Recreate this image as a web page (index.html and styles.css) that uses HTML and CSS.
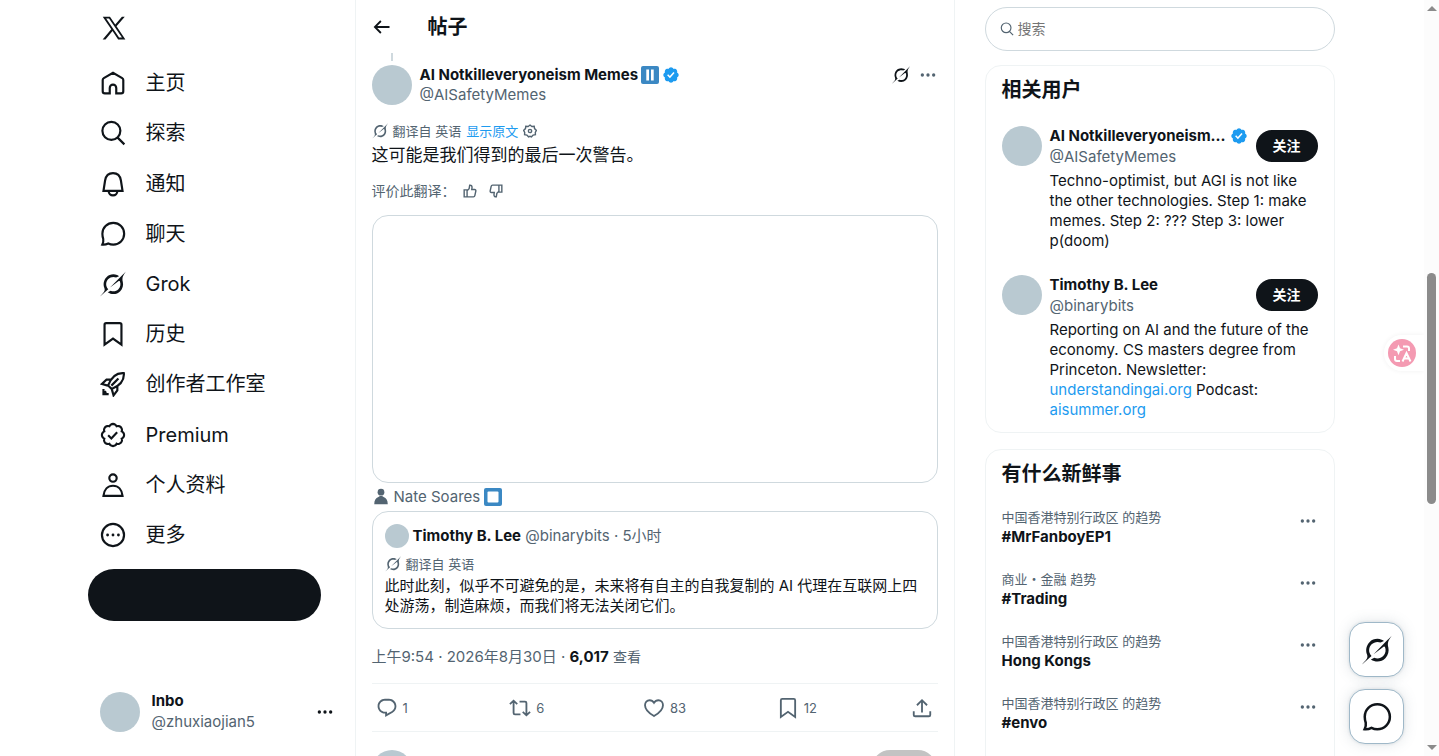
FILE: index.html
```html
<!DOCTYPE html>
<html lang="zh-CN">
<head>
<meta charset="utf-8">
<title>帖子 / X</title>
<link rel="stylesheet" href="styles.css">
</head>
<body>
<svg class="sprite" aria-hidden="true">
  <symbol id="x" viewBox="0 0 24 24"><path d="M21.742 21.75l-7.563-11.179 7.056-8.321h-2.456l-5.691 6.714-4.54-6.714H2.359l7.29 10.776L2.25 21.75h2.456l6.035-7.118 4.818 7.118h6.191-.008zM7.739 3.818L18.81 20.182h-2.447L5.29 3.818h2.447z"/></symbol>
  <symbol id="home" viewBox="0 0 24 24"><path class="line" d="M9 21.5H4.500A2 2 0 0 1 2.500 19.500V9.200a2 2 0 0 1 1-1.750L12 2.500l8.500 4.950a2 2 0 0 1 1 1.750v10.300a2 2 0 0 1-2 2H15V16.500a3 3 0 0 0-6 0z"/></symbol>
  <symbol id="search" viewBox="0 0 24 24"><path class="line" d="M10.500 1.700a8.300 8.300 0 1 1 0 16.600a8.300 8.300 0 0 1 0-16.600zM16.500 16.500l6 6"/></symbol>
  <symbol id="bell" viewBox="0 0 24 24"><path class="line" d="M3.200 18.300L4.700 8.800C5.400 4.500 8 2 12 2s6.600 2.500 7.300 6.800l1.500 9.500zM8 18.500c0 2.300 1.700 4 4 4s4-1.700 4-4"/></symbol>
  <symbol id="chat" viewBox="0 0 24 24"><path class="line" d="M12.300 1.800c5.600 0 10 4.400 10 10s-4.400 10-10 10c-1.700 0-3.300-.4-4.700-1.100-1.700.9-3.500 1.300-5.500 1.100.8-1.700 1.200-3.400.9-5.200-.5-1.500-.8-3-.8-4.800 0-5.600 4.400-10 10.100-10z"/></symbol>
  <symbol id="grok" viewBox="0 0 33 32"><path d="M12.745 20.54l10.97-8.19c.539-.4 1.307-.244 1.564.38 1.349 3.288.746 7.241-1.938 9.955-2.683 2.714-6.417 3.31-9.83 1.954l-3.728 1.745c5.347 3.697 11.84 2.782 15.898-1.324 3.219-3.255 4.216-7.692 3.284-11.693l.008.009c-1.351-5.878.332-8.227 3.782-13.031L33 0l-4.54 4.59v-.014L12.743 20.544m-2.263 1.987c-3.837-3.707-3.175-9.446.1-12.755 2.42-2.449 6.388-3.448 9.852-1.979l3.72-1.737c-.67-.49-1.53-1.017-2.515-1.387-4.455-1.854-9.789-.931-13.41 2.728-3.483 3.523-4.579 8.94-2.697 13.561 1.405 3.454-.899 5.898-3.22 8.364C1.49 30.2.666 31.074 0 32l10.478-9.466"/></symbol>
  <symbol id="bookmark" viewBox="0 0 24 24"><path class="line" d="M4.200 3.500a1.500 1.500 0 0 1 1.500-1.500h12.600a1.500 1.500 0 0 1 1.500 1.500v18.300L12 16.200l-7.800 5.600z"/></symbol>
  <symbol id="rocket" viewBox="0 0 24 24"><path class="line" d="M22 2c-6-.5-11.500 3.500-14.500 11.300l3.300 3.300C18.500 13.500 22.500 8 22 2zM10.500 8H6l-4.300 4 5.500 1.500M16 13.500V18l-3.500 4.500-1.700-6M17 7l-6.500 6.500M3.200 16.500v4.800H8M3.200 21.300l2.500-2.500"/></symbol>
  <symbol id="premium" viewBox="0 0 22 22"><path class="line thin" d="M20.396 11c-.018-.646-.215-1.275-.57-1.816-.354-.54-.852-.972-1.438-1.246.223-.607.27-1.264.14-1.897-.131-.634-.437-1.218-.882-1.687-.47-.445-1.053-.75-1.687-.882-.633-.13-1.29-.083-1.897.14-.273-.587-.704-1.086-1.245-1.44S11.647 1.620 11 1.604c-.646.017-1.273.213-1.813.568s-.969.854-1.240 1.440c-.608-.223-1.267-.272-1.902-.140-.635.130-1.220.436-1.690.882-.445.470-.749 1.055-.878 1.688-.130.633-.080 1.290.144 1.896-.587.274-1.087.705-1.443 1.245-.356.540-.555 1.170-.574 1.817.020.647.218 1.276.574 1.817.356.540.856.972 1.443 1.245-.224.606-.274 1.263-.144 1.896.130.634.433 1.218.877 1.688.470.443 1.054.747 1.687.878.633.132 1.290.084 1.897-.136.274.586.705 1.084 1.246 1.439.540.354 1.170.551 1.816.569.647-.016 1.276-.213 1.817-.567s.972-.854 1.245-1.440c.604.239 1.266.296 1.903.164.636-.132 1.220-.447 1.680-.907.460-.460.776-1.044.908-1.681s.075-1.299-.165-1.903c.586-.274 1.084-.705 1.439-1.246.354-.540.551-1.170.569-1.816zM6.900 11.300l2.700 2.700 4.900-5.400"/></symbol>
  <symbol id="person" viewBox="0 0 24 24"><path class="line" d="M12 2.200a3.400 3.400 0 1 1 0 6.800a3.400 3.400 0 0 1 0-6.800zM3.200 22c.6-5.700 3.900-9.300 8.800-9.300s8.200 3.600 8.800 9.300z"/></symbol>
  <symbol id="more" viewBox="0 0 24 24"><circle class="line" cx="12" cy="12" r="10.200"/><circle cx="7" cy="12" r="1.300"/><circle cx="12" cy="12" r="1.300"/><circle cx="17" cy="12" r="1.300"/></symbol>
  <symbol id="dots" viewBox="0 0 24 24"><circle cx="3.500" cy="12" r="2.500"/><circle cx="12" cy="12" r="2.500"/><circle cx="20.500" cy="12" r="2.500"/></symbol>
  <symbol id="back" viewBox="0 0 24 24"><path class="line bold" d="M10.500 4l-8 8 8 8M3.500 12H22"/></symbol>
  <symbol id="verified" viewBox="0 0 22 22"><path d="M20.396 11c-.018-.646-.215-1.275-.57-1.816-.354-.54-.852-.972-1.438-1.246.223-.607.27-1.264.14-1.897-.131-.634-.437-1.218-.882-1.687-.47-.445-1.053-.75-1.687-.882-.633-.13-1.29-.083-1.897.14-.273-.587-.704-1.086-1.245-1.44S11.647 1.62 11 1.604c-.646.017-1.273.213-1.813.568s-.969.854-1.24 1.44c-.608-.223-1.267-.272-1.902-.14-.635.13-1.22.436-1.69.882-.445.47-.749 1.055-.878 1.688-.13.633-.08 1.29.144 1.896-.587.274-1.087.705-1.443 1.245-.356.54-.555 1.17-.574 1.817.02.647.218 1.276.574 1.817.356.54.856.972 1.443 1.245-.224.606-.274 1.263-.144 1.896.13.634.433 1.218.877 1.688.47.443 1.054.747 1.687.878.633.132 1.29.084 1.897-.136.274.586.705 1.084 1.246 1.439.54.354 1.17.551 1.816.569.647-.016 1.276-.213 1.817-.567s.972-.854 1.245-1.44c.604.239 1.266.296 1.903.164.636-.132 1.22-.447 1.68-.907.46-.46.776-1.044.908-1.681s.075-1.299-.165-1.903c.586-.274 1.084-.705 1.439-1.246.354-.54.551-1.17.569-1.816zM9.662 14.85l-3.429-3.428 1.293-1.302 2.072 2.072 4.4-4.794 1.347 1.246z"/></symbol>
  <symbol id="pause" viewBox="0 0 18 18"><rect width="18" height="18" rx="2" fill="#3b88c3"/><path fill="#fff" d="M5.300 3.500h2.700v11H5.300zM10 3.500h2.700v11H10z"/></symbol>
  <symbol id="stop" viewBox="0 0 18 18"><rect width="18" height="18" rx="2" fill="#3b88c3"/><rect x="3.500" y="3.500" width="11" height="11" rx="1" fill="#fff"/></symbol>
  <symbol id="gear" viewBox="0 0 24 24"><path class="line bold" d="M12 1.800l3.200 2.400 4-.2.600 3.900L23 11l-1.900 3.400.2 4-4 .6L14.500 22l-2.500-1-2.500 1-2.800-3-4-.6.200-4L1 11l3.200-3.100.6-3.900 4 .2z"/><circle class="line bold" cx="12" cy="12" r="2.800"/></symbol>
  <symbol id="thumb" viewBox="0 0 24 24"><path class="line bold" d="M2 10H7v12H2zM7 11.500l3.500-3.500 1-6c2.500-.3 4 1.200 4 3.500L15 9.500h5c1.400 0 2.300 1.200 2 2.500l-1.700 8a2.500 2.500 0 0 1-2.400 2H7"/></symbol>
  <symbol id="people" viewBox="0 0 24 24"><circle cx="12" cy="5.500" r="4.500"/><path d="M3 21.500c0-5 2-8 5.500-9.500l2-1.500h3l2 1.500c3.500 1.500 5.500 4.500 5.500 9.500z"/></symbol>
  <symbol id="reply" viewBox="0 0 24 24"><path d="M1.751 10c0-4.420 3.584-8 8.005-8h4.366c4.490 0 8.129 3.640 8.129 8.130 0 2.960-1.607 5.680-4.196 7.110l-8.054 4.460v-3.690h-.067c-4.490.100-8.183-3.510-8.183-8.010zm8.005-6c-3.317 0-6.005 2.690-6.005 6 0 3.370 2.770 6.080 6.138 6.010l.351-.010h1.761v2.300l5.087-2.810c1.951-1.080 3.163-3.130 3.163-5.360 0-3.390-2.744-6.130-6.129-6.130H9.756z"/></symbol>
  <symbol id="repost" viewBox="0 0 24 24"><path class="line" d="M1 7.700l4-3.700 4 3.700M5 4.500V17.500a1.500 1.500 0 0 0 1.500 1.500h6M11.500 5H17.500a1.500 1.500 0 0 1 1.500 1.500v13M15 16.300l4 3.700 4-3.700"/></symbol>
  <symbol id="heart" viewBox="0 0 24 24"><path class="line" d="M12 20.800C6 17.200 2.200 13 2.200 8.900c0-3 2.100-5.400 5-5.400 2 0 3.700 1 4.800 2.800 1.100-1.800 2.800-2.800 4.800-2.800 2.900 0 5 2.400 5 5.400 0 4.100-3.800 8.300-9.800 11.900z"/></symbol>
  <symbol id="share" viewBox="0 0 24 24"><path class="line" d="M12 3.500v13.500M6.500 9L12 3.500l5.500 5.500M3 15.500v4a1.500 1.500 0 0 0 1.500 1.500h15a1.500 1.500 0 0 0 1.500-1.500v-4"/></symbol>
  <symbol id="translate" viewBox="0 0 28 28"><circle cx="14" cy="14" r="14" fill="#f49ab2"/><path fill="#fff" d="M10.500 5.500l1.500 3.800 4 1.500-4 1.500-1.500 4-1.500-4-4-1.500 4-1.500z"/><path fill="none" stroke="#fff" stroke-width="2" d="M15 7.500h4a2 2 0 0 1 2 2V12M7 17v3a2 2 0 0 0 2 2h3M14.500 22.500l4-8.500 4 8.500M16 19.500h5"/></symbol>
</svg>

<div class="app">
  <header class="side">
    <a class="logo" href="#" aria-label="X"><svg><use href="#x"/></svg></a>
    <nav class="nav">
      <a href="#"><svg><use href="#home"/></svg>主页</a>
      <a href="#"><svg><use href="#search"/></svg>探索</a>
      <a href="#"><svg><use href="#bell"/></svg>通知</a>
      <a href="#"><svg><use href="#chat"/></svg>聊天</a>
      <a href="#"><svg><use href="#grok"/></svg>Grok</a>
      <a href="#"><svg><use href="#bookmark"/></svg>历史</a>
      <a href="#"><svg><use href="#rocket"/></svg>创作者工作室</a>
      <a href="#"><svg><use href="#premium"/></svg>Premium</a>
      <a href="#"><svg><use href="#person"/></svg>个人资料</a>
      <a href="#"><svg><use href="#more"/></svg>更多</a>
    </nav>
    <button class="compose" aria-label="发帖"></button>
    <button class="account">
      <span class="avatar"></span>
      <span class="who loose"><b>Inbo</b><span class="muted">@zhuxiaojian5</span></span>
      <svg class="i16"><use href="#dots"/></svg>
    </button>
  </header>

  <main class="main">
    <div class="topbar">
      <button aria-label="返回"><svg class="i18"><use href="#back"/></svg></button>
      <h1>帖子</h1>
    </div>
    <article class="post">
      <div class="thread"></div>
      <div class="author">
        <span class="avatar"></span>
        <div class="who">
          <span class="name"><b>AI Notkilleveryoneism Memes</b><svg class="i18"><use href="#pause"/></svg><svg class="i18 blue"><use href="#verified"/></svg></span>
          <span class="muted">@AISafetyMemes</span>
        </div>
        <div class="tools">
          <button aria-label="Grok"><svg class="i18"><use href="#grok"/></svg></button>
          <button class="muted" aria-label="更多"><svg class="i16"><use href="#dots"/></svg></button>
        </div>
      </div>
      <div class="translated">
        <svg class="i16"><use href="#grok"/></svg><span>翻译自 英语</span><a href="#">显示原文</a><button aria-label="设置"><svg class="i14"><use href="#gear"/></svg></button>
      </div>
      <p class="text">这可能是我们得到的最后一次警告。</p>
      <div class="rate">
        <span>评价此翻译：</span>
        <button aria-label="赞"><svg class="i14"><use href="#thumb"/></svg></button>
        <button aria-label="踩"><svg class="i14 down"><use href="#thumb"/></svg></button>
      </div>
      <div class="media"></div>
      <div class="tagged"><svg class="i18"><use href="#people"/></svg><span>Nate Soares</span><svg class="i18"><use href="#stop"/></svg></div>
      <div class="quote">
        <div class="quote-head"><span class="avatar small"></span><span class="muted"><b>Timothy B. Lee</b> @binarybits · 5小时</span></div>
        <div class="translated"><svg class="i16"><use href="#grok"/></svg><span>翻译自 英语</span></div>
        <p>此时此刻，似乎不可避免的是，未来将有自主的自我复制的 AI 代理在互联网上四处游荡，制造麻烦，而我们将无法关闭它们。</p>
      </div>
      <p class="date">上午9:54 · 2026年8月30日 · <b>6,017</b> <small>查看</small></p>
      <div class="actions">
        <button><svg><use href="#reply"/></svg>1</button>
        <button><svg><use href="#repost"/></svg>6</button>
        <button><svg><use href="#heart"/></svg>83</button>
        <button><svg><use href="#bookmark"/></svg>12</button>
        <button aria-label="分享"><svg><use href="#share"/></svg></button>
      </div>
      <div class="composer"><span class="avatar"></span><button class="send" aria-label="回复" disabled></button></div>
    </article>
  </main>

  <aside class="right">
    <label class="searchbox"><svg class="i14"><use href="#search"/></svg><input type="search" placeholder="搜索" aria-label="搜索"></label>
    <section class="card">
      <h2>相关用户</h2>
      <div class="user">
        <span class="avatar"></span>
        <div class="user-body">
          <div class="user-head">
            <div class="who loose"><span class="name"><b>AI Notkilleveryoneism...</b><svg class="i18 blue"><use href="#verified"/></svg></span><span class="muted">@AISafetyMemes</span></div>
            <button class="follow">关注</button>
          </div>
          <p>Techno-optimist, but AGI is not like the other technologies. Step 1: make memes. Step 2: ??? Step 3: lower p(doom)</p>
        </div>
      </div>
      <div class="user">
        <span class="avatar"></span>
        <div class="user-body">
          <div class="user-head">
            <div class="who loose"><span class="name"><b>Timothy B. Lee</b></span><span class="muted">@binarybits</span></div>
            <button class="follow">关注</button>
          </div>
          <p>Reporting on AI and the future of the economy. CS masters degree from Princeton. Newsletter: <a href="#">understandingai.org</a> Podcast: <a href="#">aisummer.org</a></p>
        </div>
      </div>
    </section>
    <section class="card">
      <h2>有什么新鲜事</h2>
      <div class="trend"><div><span>中国香港特别行政区 的趋势</span><b>#MrFanboyEP1</b></div><button aria-label="更多"><svg class="i16"><use href="#dots"/></svg></button></div>
      <div class="trend"><div><span>商业・金融 趋势</span><b>#Trading</b></div><button aria-label="更多"><svg class="i16"><use href="#dots"/></svg></button></div>
      <div class="trend"><div><span>中国香港特别行政区 的趋势</span><b>Hong Kongs</b></div><button aria-label="更多"><svg class="i16"><use href="#dots"/></svg></button></div>
      <div class="trend"><div><span>中国香港特别行政区 的趋势</span><b>#envo</b></div><button aria-label="更多"><svg class="i16"><use href="#dots"/></svg></button></div>
      <div class="trend"></div>
    </section>
  </aside>
</div>

<div class="floating">
  <button aria-label="Grok"><svg><use href="#grok"/></svg></button>
  <button aria-label="聊天"><svg><use href="#chat"/></svg></button>
</div>
<button class="translate-tab" aria-label="翻译"><svg><use href="#translate"/></svg></button>
<div class="scrollbar" aria-hidden="true"><i class="up"></i><i class="thumb"></i><i class="down-arrow"></i></div>
</body>
</html>
```
FILE: styles.css
```css
* { box-sizing: border-box; }
body {
  margin: 0;
  height: 100vh;
  overflow: hidden;
  padding-right: 15px;
  background: #fff;
  color: #0f1419;
  font: 15px/20px Inter, "Noto Sans CJK SC", sans-serif;
}
h1, h2, p { margin: 0; }
a { color: #1d9bf0; text-decoration: none; }
button { border: 0; padding: 0; background: none; color: inherit; font: inherit; display: flex; align-items: center; cursor: pointer; }
svg { fill: currentColor; flex: none; display: block; }
.sprite { position: absolute; width: 0; height: 0; }
.line { fill: none; stroke: currentColor; stroke-width: 2; }
.thin { stroke-width: 1.8; }
.bold { stroke-width: 2.4; }
.i14 { width: 14px; height: 14px; }
.i16 { width: 16px; height: 16px; }
.i18 { width: 18px; height: 18px; }
.blue { color: #1d9bf0; }
.muted { color: #536471; }
b { font-weight: 700; color: #0f1419; }
.avatar { width: 40px; height: 40px; border-radius: 50%; background: #b9c9d1; flex: none; }
.avatar.small { width: 24px; height: 24px; }

.app { display: flex; justify-content: center; height: 100vh; overflow: hidden; padding-right: 10px; }

.side { width: 275px; padding: 0 8px; display: flex; flex-direction: column; }
.logo { color: #0f1419; padding: 14px 12px 16px; }
.logo svg { width: 28px; height: 28px; }
.nav { display: flex; flex-direction: column; height: 502px; flex: none; }
.nav a { flex: 1; display: flex; align-items: center; gap: 20px; padding: 0 12px; color: #0f1419; font-size: 20px; line-height: 24px; }
.nav svg { width: 26px; height: 26px; }
.compose { flex: none; width: 90%; height: 52px; margin-top: 9px; border-radius: 26px; background: #0f1419; }
.account { margin-top: auto; margin-bottom: 12px; padding: 12px 14px 12px 12px; gap: 12px; text-align: left; }
.account .i16 { margin-left: auto; }
.who { display: flex; flex-direction: column; min-width: 0; }
.who.loose { gap: 1px; }

.main { width: 600px; flex: none; border: solid #eff3f4; border-width: 0 1px; }
.topbar { height: 53px; display: flex; align-items: center; padding: 0 17px; gap: 37px; }
.topbar h1 { font-size: 20px; line-height: 24px; }
.post { padding: 0 16px; }
.thread { width: 2px; height: 8px; margin: 0 19px 4px; background: #cfd9de; }
.author { display: flex; gap: 8px; }
.name { display: flex; align-items: center; gap: 4px; }
.author .name { gap: 3px; }
.tools { margin-left: auto; display: flex; gap: 10px; height: 20px; padding-right: 2px; }
.translated { display: flex; align-items: center; gap: 5px; color: #536471; font-size: 13px; line-height: 16px; }
.author + .translated { margin-top: 18px; }
.text { font-size: 17px; line-height: 24px; margin-top: 4px; }
.rate { display: flex; align-items: center; gap: 12px; margin-top: 14px; color: #536471; font-size: 14px; }
.rate span { width: 79px; white-space: nowrap; }
.down { transform: rotate(180deg); }
.media { height: 268px; margin-top: 14px; border: 1px solid #cfd9de; border-radius: 16px; }
.tagged { display: flex; align-items: center; gap: 4px; margin: 4px 0; color: #536471; }
.quote { padding: 12px; border: 1px solid #cfd9de; border-radius: 16px; }
.quote-head { display: flex; align-items: center; gap: 4px; }
.quote .translated { margin: 8px 0 4px; }
.date { margin: 18px 0 16px; color: #536471; }
.date small { font-size: 14px; }
.actions { display: grid; grid-template-columns: repeat(4, 1fr) 22px; padding: 13px 5px 12px 4px; border: solid #eff3f4; border-width: 1px 0; color: #536471; font-size: 13px; }
.actions button { gap: 5px; }
.actions svg { width: 22px; height: 22px; }
.composer { display: flex; justify-content: space-between; padding: 18px 2px 0 0; }
.send { width: 64px; height: 36px; border-radius: 18px; background: #c3c3c3; }

.right { width: 350px; margin-left: 30px; flex: none; padding-top: 7px; }
.searchbox { display: flex; align-items: center; gap: 4px; height: 44px; padding: 0 14px; border: 1px solid #cfd9de; border-radius: 22px; color: #536471; }
.searchbox input { border: 0; outline: 0; background: none; font: inherit; font-size: 14px; flex: 1; padding: 0; }
.card { margin-top: 14px; border: 1px solid #eff3f4; border-radius: 16px; padding-bottom: 12px; }
.card + .card { margin-top: 16px; }
.card h2 { padding: 12px 16px 10px; font-size: 20px; line-height: 24px; }
.user { display: flex; gap: 8px; padding: 14px 16px 10px; }
.user + .user { padding: 14px 16px 0; }
.user-body { flex: 1; min-width: 0; }
.user-head { display: flex; justify-content: space-between; align-items: center; height: 40px; margin-bottom: 5px; }
.follow { height: 32px; padding: 0 17px; border-radius: 16px; background: #0f1419; color: #fff; font-size: 14px; font-weight: 700; }
.trend { display: flex; justify-content: space-between; padding: 11px 18px 11px 16px; }
.trend div { display: flex; flex-direction: column; }
.trend span { color: #536471; font-size: 13px; }
.trend button { color: #536471; height: 28px; }

.floating { position: fixed; right: 35px; bottom: 12px; display: grid; gap: 12px; }
.floating button { width: 55px; height: 55px; justify-content: center; border: 1px solid #9fb8c8; border-radius: 16px; background: #fff; box-shadow: 0 0 14px rgba(101, 119, 134, .2), 0 0 3px rgba(101, 119, 134, .2); }
.floating svg { width: 30px; height: 30px; }
.translate-tab { position: fixed; right: 15px; top: 335px; padding: 4px 8px 4px 4px; border-radius: 18px 0 0 18px; background: #fff; box-shadow: 0 0 5px rgba(0, 0, 0, .06); }
.translate-tab svg { width: 28px; height: 28px; }
.scrollbar { position: fixed; inset: 0 0 0 auto; width: 15px; background: #fcfcfc; display: flex; flex-direction: column; align-items: center; padding: 6px 0; }
.scrollbar .thumb { width: 9px; height: 231px; margin: 262px 0 auto; border-radius: 5px; background: #8b8b8b; }
.up, .down-arrow { border: solid transparent; border-width: 0 5px; }
.up { border-bottom: 5px solid #8b8b8b; }
.down-arrow { border-top: 5px solid #8b8b8b; }
```
